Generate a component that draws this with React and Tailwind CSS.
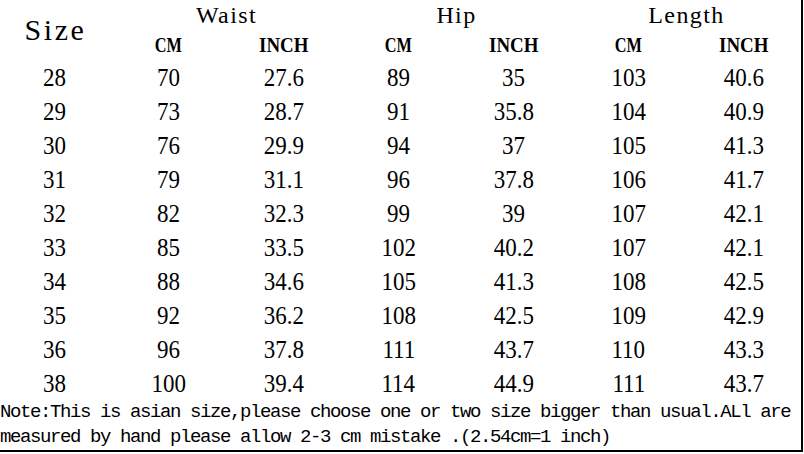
import React from "react";

const rows = [
  ["28", "70", "27.6", "89", "35", "103", "40.6"],
  ["29", "73", "28.7", "91", "35.8", "104", "40.9"],
  ["30", "76", "29.9", "94", "37", "105", "41.3"],
  ["31", "79", "31.1", "96", "37.8", "106", "41.7"],
  ["32", "82", "32.3", "99", "39", "107", "42.1"],
  ["33", "85", "33.5", "102", "40.2", "107", "42.1"],
  ["34", "88", "34.6", "105", "41.3", "108", "42.5"],
  ["35", "92", "36.2", "108", "42.5", "109", "42.9"],
  ["36", "96", "37.8", "111", "43.7", "110", "43.3"],
  ["38", "100", "39.4", "114", "44.9", "111", "43.7"],
];

const mono = "font-['Liberation_Mono',monospace]";
const serif = "font-['Liberation_Serif',serif]";

function Unit({ label }) {
  return (
    <div className="flex items-center justify-center">
      <span
        className={`${serif} inline-block text-[22px] font-bold leading-none text-black ${
          label === "CM" ? "scale-x-[0.74]" : "scale-x-[0.86]"
        }`}
      >
        {label}
      </span>
    </div>
  );
}

function Group({ children }) {
  return (
    <div className={`${serif} col-span-2 flex items-center justify-center pl-[1px] pt-[1px] text-[24px] leading-none tracking-[1.4px]`}>
      {children}
    </div>
  );
}

export default function App() {
  return (
    <div className="h-[452px] w-[803px] overflow-hidden border-b-2 border-r-2 border-black bg-white text-black">
      <div className="grid h-[60px] grid-cols-[111px_repeat(6,115px)] grid-rows-[29px_31px]">
        <div className={`${serif} row-span-2 flex items-center justify-center text-[30px] leading-none tracking-[2.6px]`}>
          Size
        </div>
        <Group>Waist</Group>
        <Group>Hip</Group>
        <Group>Length</Group>
        <Unit label="CM" />
        <Unit label="INCH" />
        <Unit label="CM" />
        <Unit label="INCH" />
        <Unit label="CM" />
        <Unit label="INCH" />
      </div>
      {rows.map((r, i) => (
        <div key={i} className="grid h-[34px] grid-cols-[111px_repeat(6,115px)]">
          {r.map((v, j) => (
            <div
              key={j}
              className={`flex items-center justify-center ${j === 0 ? "pr-[3px]" : ""}`}
            >
              <span className={`${serif} inline-block scale-x-[0.92] text-[25px] leading-none`}>
                {v}
              </span>
            </div>
          ))}
        </div>
      ))}
      <p className={`${mono} text-[19px] leading-[25px] tracking-[-1.4px] whitespace-pre`}>
        {"Note:This is asian size,please choose one or two size bigger than usual.ALl are\nmeasured by hand please allow 2-3 cm mistake .(2.54cm=1 inch)"}
      </p>
    </div>
  );
}
